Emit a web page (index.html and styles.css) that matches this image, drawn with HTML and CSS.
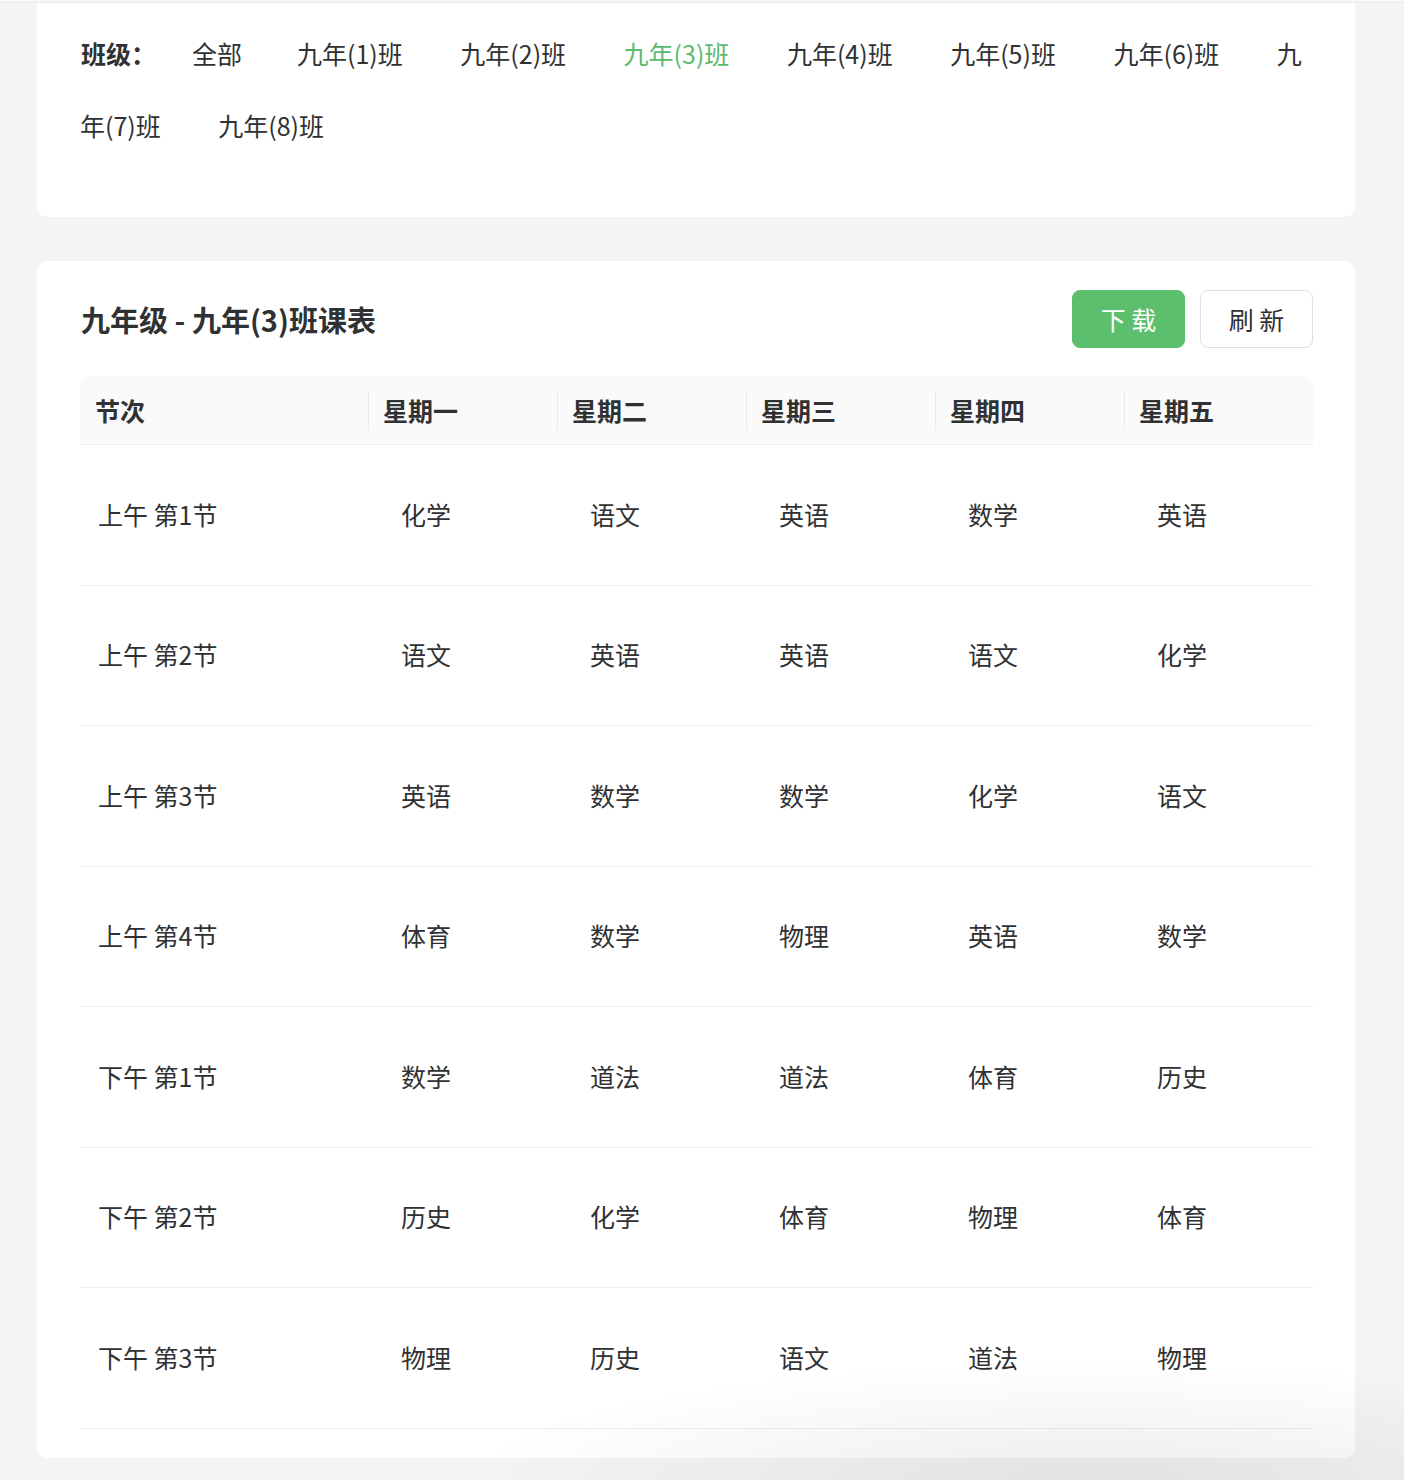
FILE: index.html
```html
<!DOCTYPE html>
<html lang="zh-CN">
<head>
<meta charset="utf-8">
<title>课表</title>
<link rel="stylesheet" href="styles.css">
</head>
<body>
<div class="topbar"></div>
<main class="page">
  <section class="card filter-card">
    <span class="filter-label">班级：</span><span class="filter-item all">全部</span><span class="filter-item">九年(1)班</span><span class="filter-item">九年(2)班</span><span class="filter-item active">九年(3)班</span><span class="filter-item">九年(4)班</span><span class="filter-item">九年(5)班</span><span class="filter-item">九年(6)班</span><span class="filter-item">九年(7)班</span><span class="filter-item">九年(8)班</span>
  </section>

  <section class="card table-card">
    <div class="card-head">
      <h2 class="card-title">九年级 - 九年(3)班课表</h2>
      <div class="actions">
        <button class="btn btn-primary">下 载</button>
        <button class="btn btn-default">刷 新</button>
      </div>
    </div>

    <div class="timetable">
      <div class="row head">
        <div class="cell first">节次</div>
        <div class="cell">星期一</div>
        <div class="cell">星期二</div>
        <div class="cell">星期三</div>
        <div class="cell">星期四</div>
        <div class="cell">星期五</div>
      </div>
      <div class="row">
        <div class="cell first">上午 第1节</div>
        <div class="cell">化学</div><div class="cell">语文</div><div class="cell">英语</div><div class="cell">数学</div><div class="cell">英语</div>
      </div>
      <div class="row">
        <div class="cell first">上午 第2节</div>
        <div class="cell">语文</div><div class="cell">英语</div><div class="cell">英语</div><div class="cell">语文</div><div class="cell">化学</div>
      </div>
      <div class="row">
        <div class="cell first">上午 第3节</div>
        <div class="cell">英语</div><div class="cell">数学</div><div class="cell">数学</div><div class="cell">化学</div><div class="cell">语文</div>
      </div>
      <div class="row">
        <div class="cell first">上午 第4节</div>
        <div class="cell">体育</div><div class="cell">数学</div><div class="cell">物理</div><div class="cell">英语</div><div class="cell">数学</div>
      </div>
      <div class="row">
        <div class="cell first">下午 第1节</div>
        <div class="cell">数学</div><div class="cell">道法</div><div class="cell">道法</div><div class="cell">体育</div><div class="cell">历史</div>
      </div>
      <div class="row">
        <div class="cell first">下午 第2节</div>
        <div class="cell">历史</div><div class="cell">化学</div><div class="cell">体育</div><div class="cell">物理</div><div class="cell">体育</div>
      </div>
      <div class="row">
        <div class="cell first">下午 第3节</div>
        <div class="cell">物理</div><div class="cell">历史</div><div class="cell">语文</div><div class="cell">道法</div><div class="cell">物理</div>
      </div>
    </div>
  </section>
</main>
<div class="vignette"></div>
</body>
</html>
```

FILE: styles.css
```css
html, body {
  margin: 0;
  padding: 0;
}
body {
  background: #f4f4f4;
  font-family: "Noto Sans CJK SC", "Noto Sans", sans-serif;
  color: #303133;
  min-height: 1480px;
}
.topbar {
  height: 2px;
  border-bottom: 1px solid #e8e8e8;
  background: #f6f6f6;
}
.page {
  padding: 0 49px 0 37px;
}
.card {
  background: #fff;
  border-radius: 10px;
}
.filter-card {
  border-radius: 0 0 10px 10px;
  padding: 14px 42px 56px 43px;
  font-size: 25px;
  line-height: 72px;
  color: #303133;
}
.filter-label {
  font-weight: 700;
  margin-left: 1px;
  margin-right: 36px;
}
.filter-item {
  margin-right: 57.5px;
}
.filter-item.all {
  margin-right: 55px;
}
.filter-item.active {
  color: #5cb96e;
}
.table-card {
  margin-top: 44px;
  padding: 29px 42px 29px 43px;
}
.card-head {
  display: flex;
  align-items: center;
  justify-content: space-between;
  height: 58px;
}
.card-title {
  margin: 0 0 0 1px;
  font-size: 29px;
  font-weight: 700;
  color: #303133;
}
.actions {
  display: flex;
  gap: 15px;
}
.btn {
  width: 113px;
  height: 58px;
  border-radius: 8px;
  font-family: inherit;
  font-size: 25px;
  padding: 0;
  cursor: pointer;
}
.btn-primary {
  background: #5cbf6e;
  border: 1px solid #5cbf6e;
  color: #fff;
}
.btn-default {
  background: #fff;
  border: 1px solid #dcdfe6;
  color: #303133;
}
.timetable {
  margin-top: 28px;
}
.row {
  display: grid;
  grid-template-columns: 288px repeat(5, 1fr);
  height: 139.5px;
  border-bottom: 1px solid #ebeef5;
}
.row.head {
  height: 68px;
  background: #fafafa;
  border-radius: 10px 10px 0 0;
}
.cell {
  display: flex;
  align-items: center;
  padding-left: 33px;
  padding-bottom: 2px;
  font-size: 25px;
  color: #303133;
  position: relative;
}
.cell.first {
  padding-left: 18px;
}
.head .cell {
  font-weight: 700;
  padding-left: 15px;
  padding-bottom: 0;
  color: #303133;
}
.head .cell + .cell::before {
  content: "";
  position: absolute;
  left: 0;
  top: 16px;
  bottom: 14px;
  width: 1px;
  background: #ebebeb;
}
.vignette {
  position: fixed;
  left: 0;
  top: 0;
  width: 100%;
  height: 100%;
  pointer-events: none;
  background: radial-gradient(ellipse 45% 8% at 78% 100%, rgba(0,0,0,0.07), rgba(0,0,0,0) 100%);
}
```
